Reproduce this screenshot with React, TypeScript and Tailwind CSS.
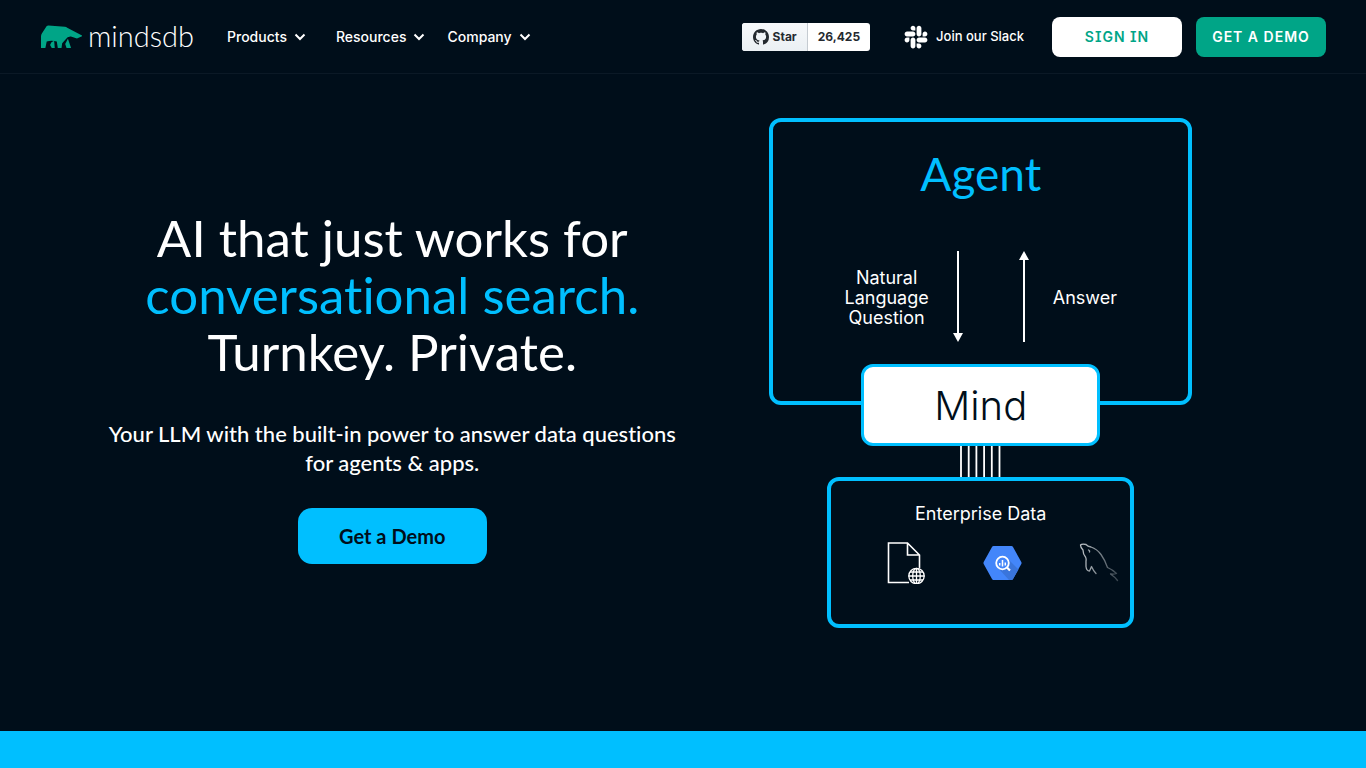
import { FaSlack } from "react-icons/fa";

function MammothMark() {
  return (
    <svg viewBox="35 44 122 68" className="h-[23px] w-[41px]" aria-hidden="true">
      <g fill="#00a587">
        <path d="M35 112V77Q35 72 38 68L52 47Q54 45 57 45L106 49Q110 49 113 52L157 75V77L142 84L124 78Q114 77 108 87L98 98L96 112H85L82 93Q66 88 52 93L48 112Z" />
        <path d="M66 95L74 91L76 112H67L62 103Z" />
        <path d="M115 85L124 111V112H111L107 100Z" />
      </g>
    </svg>
  );
}

function GithubMark() {
  return (
    <svg viewBox="0 0 16 16" className="size-4" fill="currentColor" aria-hidden="true">
      <path d="M8 0C3.580 0 0 3.580 0 8c0 3.540 2.290 6.530 5.470 7.590.4.070.55-.17.55-.38 0-.19-.010-.82-.010-1.490-2.010.37-2.530-.49-2.690-.94-.090-.23-.48-.94-.82-1.130-.28-.15-.68-.52-.010-.53.63-.010 1.080.58 1.230.82.72 1.210 1.870.87 2.330.66.070-.52.28-.87.51-1.070-1.780-.2-3.640-.89-3.640-3.950 0-.87.31-1.590.82-2.150-.080-.2-.36-1.020.080-2.120 0 0 .67-.21 2.200.82.64-.18 1.320-.27 2-.27s1.360.090 2 .27c1.530-1.040 2.200-.82 2.200-.82.44 1.100.16 1.920.080 2.120.51.56.82 1.270.82 2.150 0 3.070-1.870 3.750-3.650 3.950.29.25.54.73.54 1.480 0 1.070-.010 1.930-.010 2.200 0 .21.15.46.55.38A8.010 8.010 0 0 0 16 8c0-4.420-3.580-8-8-8Z" />
    </svg>
  );
}

function Chevron() {
  return (
    <svg viewBox="0 0 12 8" className="h-2 w-3" aria-hidden="true">
      <path d="M1.500 1.500L6 6L10.500 1.500" fill="none" stroke="white" strokeWidth="2" />
    </svg>
  );
}

function NavItem({ label }: { label: string }) {
  return (
    <button type="button" className="flex items-center gap-[7px] text-sm font-medium">
      {label}
      <Chevron />
    </button>
  );
}

function Header() {
  return (
    <header className="flex items-center border-b border-[#0b1926] pt-[17px] pr-10 pb-4 pl-[41px]">
      <a href="#home" className="flex h-10 items-center gap-[6px] pb-[2px]" aria-label="mindsdb">
        <MammothMark />
        <span className="font-[Lato,sans-serif] text-[29px] leading-8 font-light">mindsdb</span>
      </a>
      <nav className="ml-[33px] flex items-center gap-[22px]">
        <div className="mr-2">
          <NavItem label="Products" />
        </div>
        <NavItem label="Resources" />
        <NavItem label="Company" />
      </nav>
      <div className="ml-auto flex items-center">
        <a
          href="#github"
          className="flex h-7 items-stretch overflow-hidden rounded-[3px] bg-white text-xs leading-7 font-bold text-[#24292f]"
        >
          <span className="flex items-center gap-1 border-r border-[#c5cbd1] bg-linear-to-b from-[#f6f8fa] to-[#ebf0f4] pr-[10px] pl-[11px]">
            <GithubMark />
            Star
          </span>
          <span className="px-[10px]">26,425</span>
        </a>
        <a href="#slack" className="ml-[33px] flex items-center gap-[7px] text-[13px] font-medium">
          <FaSlack className="size-[26px]" />
          Join our Slack
        </a>
        <a
          href="#signin"
          className="ml-7 flex h-10 w-[130px] items-center justify-center rounded-lg bg-white text-sm font-semibold tracking-[1px] text-[#00a587] [font-feature-settings:'cv08','ss02']"
        >
          SIGN IN
        </a>
        <a
          href="#demo"
          className="ml-[14px] flex h-10 w-[130px] items-center justify-center rounded-lg bg-[#00a587] text-sm font-semibold tracking-[1px]"
        >
          GET A DEMO
        </a>
      </div>
    </header>
  );
}

function DataFileIcon() {
  return (
    <svg viewBox="0 0 38 42" className="h-[42px] w-[38px]" fill="none" stroke="white" aria-hidden="true">
      <path d="M22 40.500H1.500V1H20.500L32.500 13V26M20.500 1V13H32.500" strokeWidth="1.600" />
      <circle cx="29.500" cy="34" r="8.500" fill="#000e1a" stroke="none" />
      <g strokeWidth="1.300">
        <circle cx="29.500" cy="34" r="7.700" />
        <ellipse cx="29.500" cy="34" rx="3.800" ry="7.700" />
        <path d="M29.500 26V42M21.500 34H37.500M23 30H36M23 38H36" />
      </g>
    </svg>
  );
}

function QueryIcon() {
  return (
    <svg viewBox="0 0 39 34" className="h-[34px] w-[39px]" aria-hidden="true">
      <path
        d="M10.500 0H28.500Q29.500 0 30 1L38.300 16Q38.800 17 38.300 18L30 33Q29.500 34 28.500 34H10.500Q9.500 34 9 33L.7 18Q.2 17 .7 16L9 1Q9.500 0 10.500 0Z"
        fill="#4386fa"
      />
      <path d="M24 12L35.500 23.500L30 33Q29.500 34 28.500 34H26L15 22Z" fill="#3a75db" />
      <circle cx="19.500" cy="17" r="6.300" fill="#4386fa" stroke="white" strokeWidth="1.800" />
      <path d="M24 21.500L27 24.500" stroke="white" strokeWidth="2.200" />
      <path d="M16.700 17V19.500M19.500 14V20.500M22.300 16.500V19.500" stroke="white" strokeWidth="1.500" />
    </svg>
  );
}

function DolphinIcon() {
  return (
    <svg viewBox="0 0 40 40" className="size-10" fill="none" aria-hidden="true">
      <defs>
        <linearGradient id="dolphin-fade" x1="0" y1="0" x2="40" y2="0" gradientUnits="userSpaceOnUse">
          <stop offset="0" stopColor="#c3c8cc" />
          <stop offset="1" stopColor="#35414b" />
        </linearGradient>
      </defs>
      <g stroke="url(#dolphin-fade)" strokeWidth="1.300" strokeLinecap="round" strokeLinejoin="round">
        <path d="M17 30.500Q14.500 28 12.500 23.500Q11.500 26 10.500 28Q7.500 28 7 23.500V18Q7.500 16 6.500 14Q4 11 4 7Q1.500 4.500 1.500 2Q3 .5 7 1.500Q8.500 3.500 12 4Q18 6 22 11.500Q26 17 28.500 24.500Q33.500 26.500 37.500 30.500Q35 31.500 31.500 31Q36 34 38.500 37.500" />
        <path d="M9.500 7Q11 7.500 10.500 9" />
      </g>
    </svg>
  );
}

function Arrow({ up }: { up?: boolean }) {
  return (
    <svg viewBox="0 0 10 91" className={up ? "h-[91px] w-[10px]" : "h-[91px] w-[10px] rotate-180"} aria-hidden="true">
      <path d="M0 9L5 0L10 9Z" fill="white" />
      <path d="M5 8V91" stroke="white" strokeWidth="2" />
    </svg>
  );
}

function Diagram() {
  return (
    <div className="flex flex-col items-center text-center">
      <section className="h-[287px] w-[423px] rounded-xl border-4 border-[#00bfff] pt-[25px]">
        <h2 className="font-[Lato,sans-serif] text-[46px] leading-[54px] text-[#00bfff]">Agent</h2>
        <div className="mt-[50px] flex items-center justify-center gap-6 text-lg leading-5">
          <p className="pt-[3px]">
            Natural
            <br />
            Language
            <br />
            Question
          </p>
          <div className="flex gap-14">
            <Arrow />
            <Arrow up />
          </div>
          <p className="pt-[3px]">Answer</p>
        </div>
      </section>
      <div className="relative -mt-[41px] flex h-[82px] w-[239px] items-center justify-center rounded-xl border-3 border-[#00bfff] bg-white pt-[2px] text-[40px] font-light text-[#000e1a]">
        Mind
      </div>
      <svg viewBox="1 0 42 31" className="h-[31px] w-[42px]" aria-hidden="true">
        <path d="M2 0V31M9.700 0V31M17.400 0V31M25.100 0V31M32.800 0V31M40.500 0V31" stroke="white" strokeWidth="1.800" />
      </svg>
      <section className="h-[151px] w-[307px] rounded-xl border-4 border-[#00bfff] pt-[21px]">
        <h3 className="text-lg leading-6">Enterprise Data</h3>
        <div className="mt-4 flex items-center justify-between pr-[11px] pl-14">
          <DataFileIcon />
          <QueryIcon />
          <DolphinIcon />
        </div>
      </section>
    </div>
  );
}

export default function App() {
  return (
    <div className="flex min-h-screen flex-col bg-[#000e1a] font-[Inter,sans-serif] text-white">
      <Header />
      <main className="grid grow grid-cols-2 items-start pt-11 pr-[91px] pb-[103px] pl-[98px]">
        <section className="flex flex-col items-center pt-[91px] text-center font-[Lato,sans-serif] [font-variant-ligatures:none]">
          <h1 className="text-[51px] leading-[57px]">
            AI that just works for
            <br />
            <span className="text-[#00bfff]">conversational search.</span>
            <br />
            Turnkey. Private.
          </h1>
          <p className="mt-[39px] text-[22px] leading-[29px] font-medium">
            Your LLM with the built-in power to answer data questions
            <br />
            for agents &amp; apps.
          </p>
          <a
            href="#demo"
            className="mt-[31px] flex h-14 w-[189px] items-center justify-center rounded-[14px] bg-[#00bfff] text-xl font-bold text-[#000e1a]"
          >
            Get a Demo
          </a>
        </section>
        <Diagram />
      </main>
      <div className="h-[37px] bg-[#00bfff]" />
    </div>
  );
}
